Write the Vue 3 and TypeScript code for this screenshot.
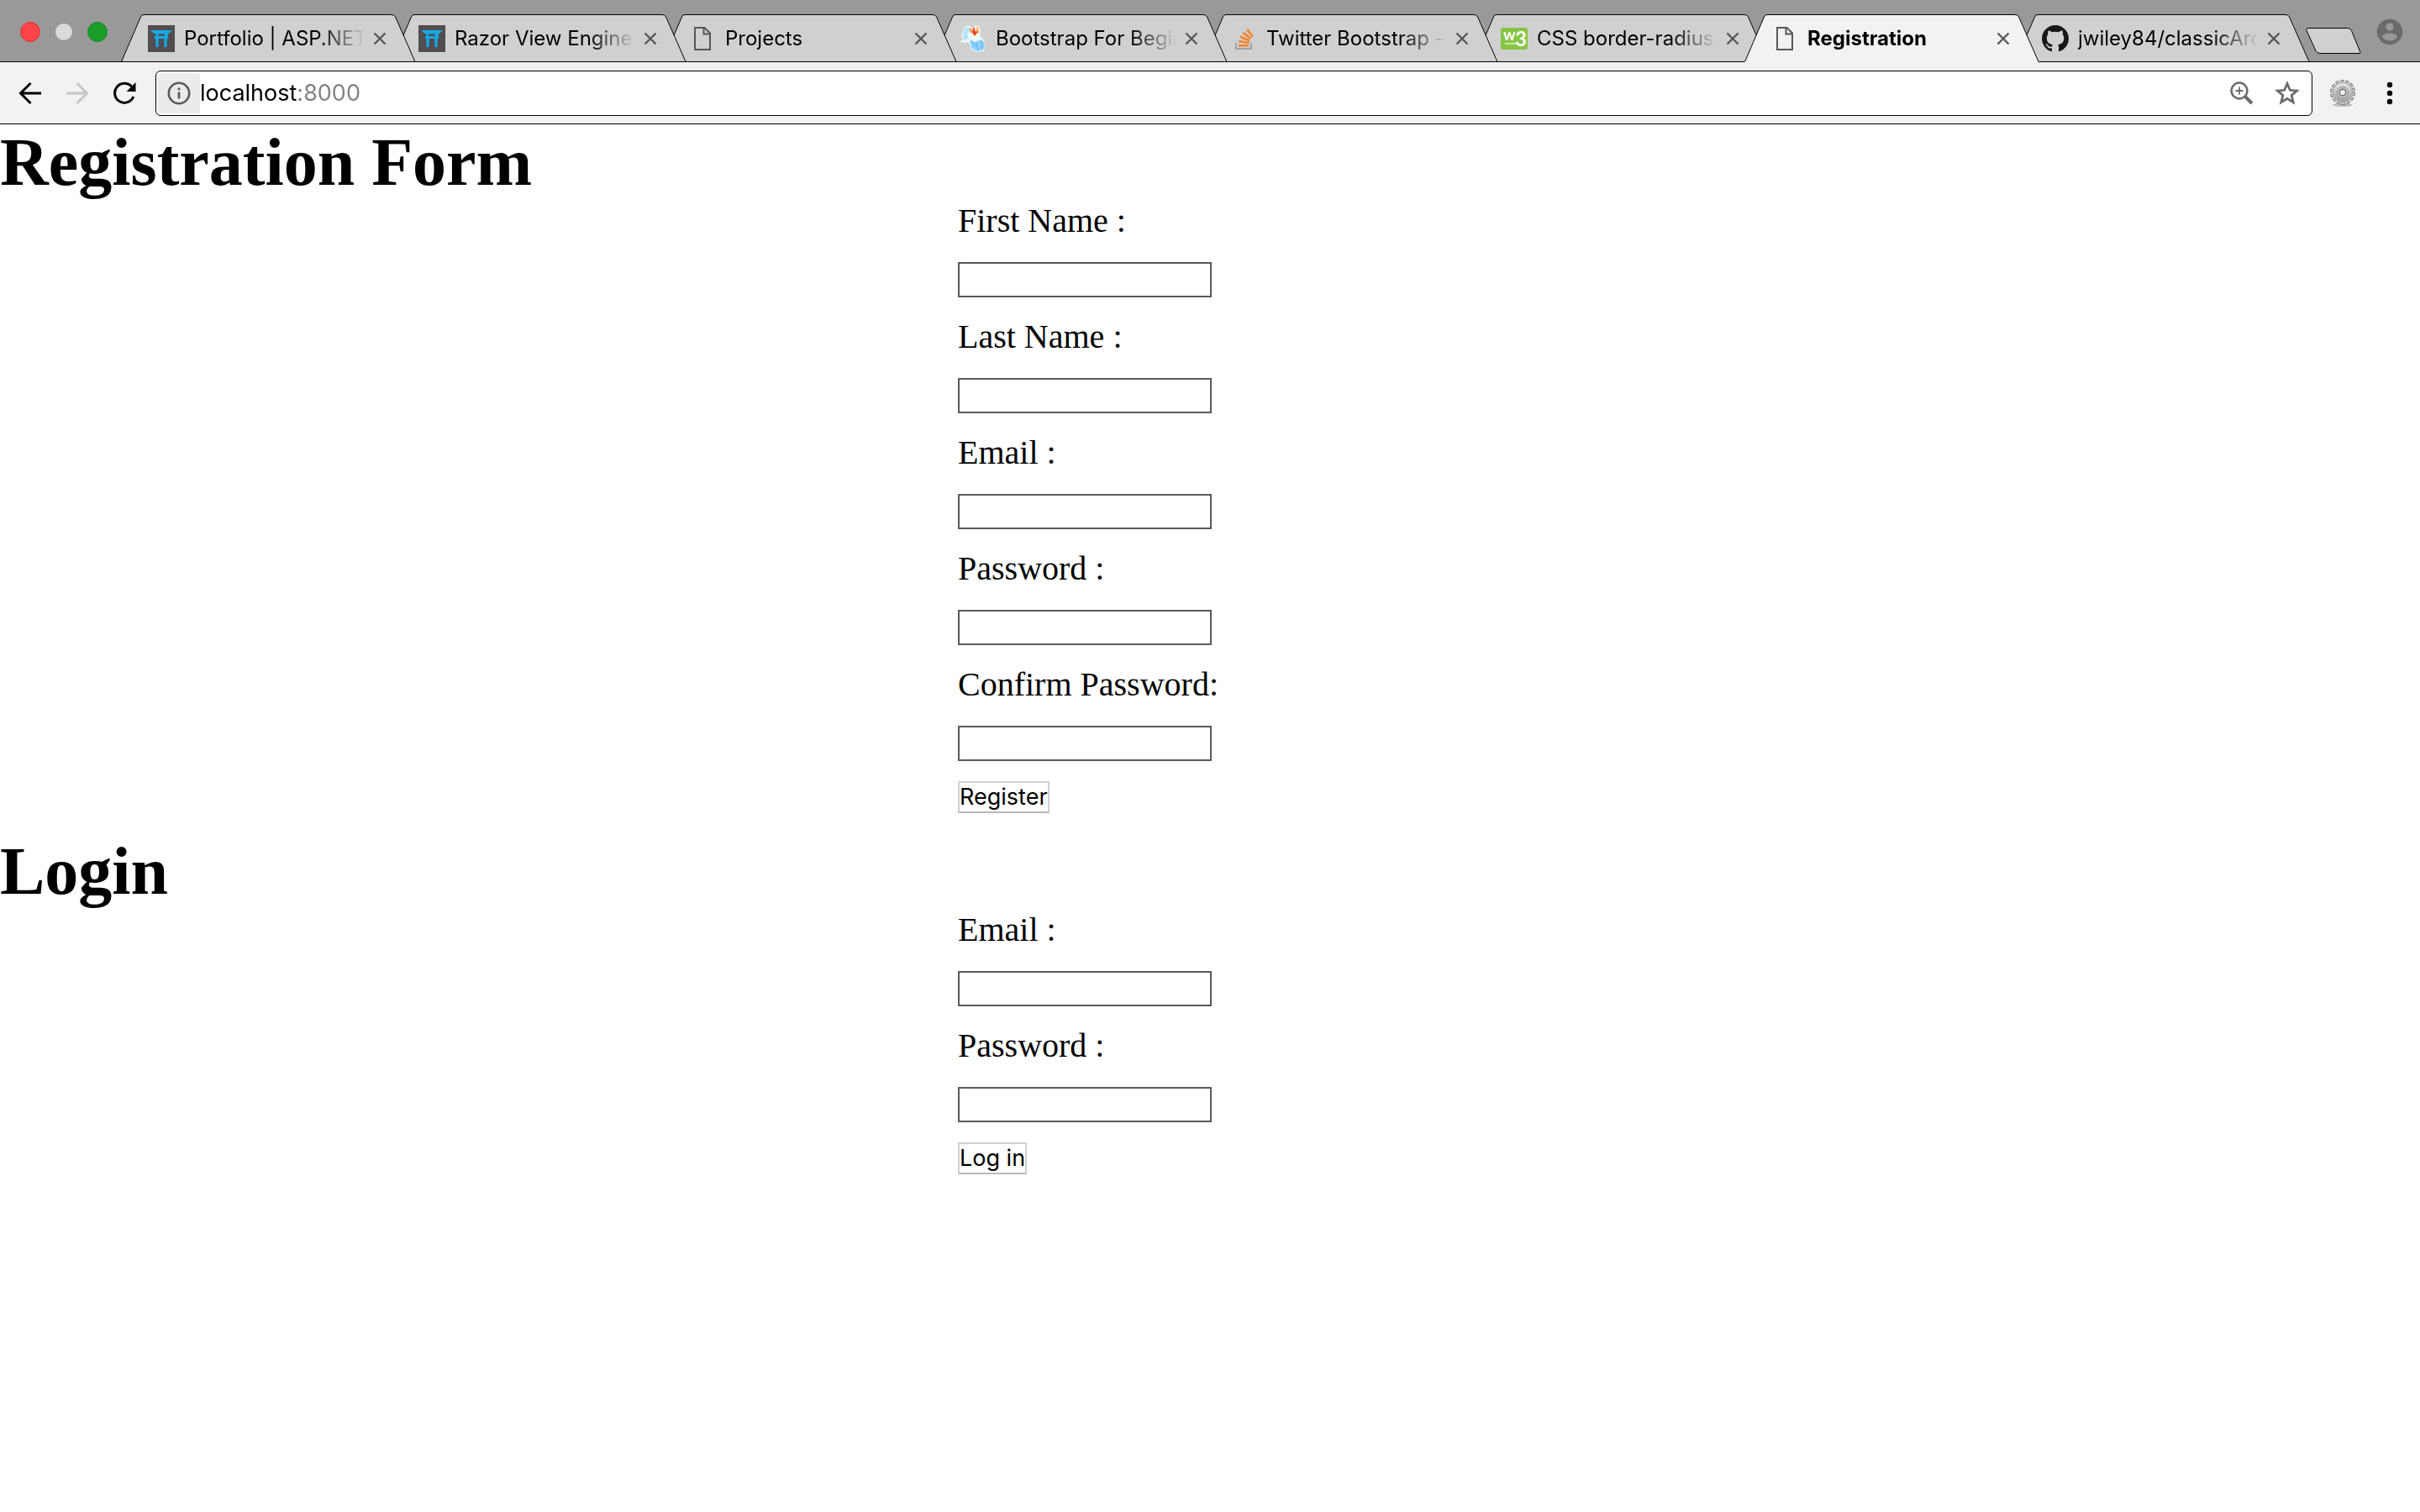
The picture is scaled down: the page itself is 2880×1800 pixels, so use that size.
<script setup lang="ts">
import { ref } from 'vue'

type IconName = 'torii' | 'file' | 'mascot' | 'stack' | 'w3' | 'github'

interface Tab {
  title: string
  icon: IconName
  active?: boolean
}

interface Field {
  id: string
  label: string
  type: string
}

interface FormSection {
  id: string
  heading: string
  action: string
  fields: Field[]
}

const tabs: Tab[] = [
  { title: 'Portfolio | ASP.NET', icon: 'torii' },
  { title: 'Razor View Engine', icon: 'torii' },
  { title: 'Projects', icon: 'file' },
  { title: 'Bootstrap For Begin', icon: 'mascot' },
  { title: 'Twitter Bootstrap -', icon: 'stack' },
  { title: 'CSS border-radius', icon: 'w3' },
  { title: 'Registration', icon: 'file', active: true },
  { title: 'jwiley84/classicArc', icon: 'github' },
]

const sections: FormSection[] = [
  {
    id: 'register',
    heading: 'Registration Form',
    action: 'Register',
    fields: [
      { id: 'first-name', label: 'First Name :', type: 'text' },
      { id: 'last-name', label: 'Last Name :', type: 'text' },
      { id: 'email', label: 'Email :', type: 'text' },
      { id: 'password', label: 'Password :', type: 'password' },
      { id: 'confirm', label: 'Confirm Password:', type: 'password' },
    ],
  },
  {
    id: 'login',
    heading: 'Login',
    action: 'Log in',
    fields: [
      { id: 'email', label: 'Email :', type: 'text' },
      { id: 'password', label: 'Password :', type: 'password' },
    ],
  },
]

const address = ref('localhost:8000')
const stacking = (tab: Tab, index: number): number => (tab.active ? tabs.length + 1 : tabs.length - index)
</script>

<template>
  <div class="window">
    <header class="strip">
      <div class="lights">
        <svg width="112" height="28" viewBox="0 0 112 28" aria-hidden="true">
          <circle cx="16" cy="14" r="11.5" fill="#ff4448" stroke="#dd3338" />
          <circle cx="56" cy="14" r="10" fill="#dadada" />
          <circle cx="96" cy="14" r="11.5" fill="#1b9d29" stroke="#138a20" />
        </svg>
      </div>
      <nav class="tabs">
        <div
          v-for="(tab, i) in tabs"
          :key="tab.title"
          class="tab"
          :class="{ active: tab.active }"
          :style="{ zIndex: stacking(tab, i) }"
        >
          <svg class="shape" viewBox="0 0 350 57" preserveAspectRatio="none" aria-hidden="true">
            <path class="fill" d="M0 57 L23.5 3 Q24.5 .5 27 .5 H322 Q325 .5 326.5 3 L350.5 57 Z" />
            <path class="edge" d="M0.5 56.5 L23.5 3 Q24.5 .5 27 .5 H322 Q325 .5 326.5 3 L350 56.5" />
            <path v-if="!tab.active" class="edge" d="M0 56.5 H350" />
          </svg>
          <svg class="favicon" viewBox="0 0 32 32" aria-hidden="true">
            <g v-if="tab.icon === 'torii'">
              <rect width="32" height="32" fill="#524d50" />
              <path
                fill="#17a7e1"
                d="M3 6 H29 L25 10 H24 V16 H22.7 V26 H19.3 V16 H12.7 V26 H9.3 V16 H8 V13 H9.3 V10 H7 Z M12.3 10.5 V13 H19.7 V10.5 Z"
              />
            </g>
            <path
              v-else-if="tab.icon === 'file'"
              d="M7 3 H18.5 L25 9.5 V29 H7 Z M17.5 3 V10.5 H25"
              fill="none"
              stroke="#575757"
              stroke-width="2"
            />
            <g v-else-if="tab.icon === 'mascot'">
              <path d="M5 3 L10 0 L15 3 L18 0 L23 1 L25 7 L24 12 L28 17 L30 22 L29 31 L20 32 L14 29 L11 20 L6 21 L0 20 L5 16 L2 13 Z" fill="#eef8fc" />
              <path d="M6 3 L12 2 L12 7 L9 11 L11 15 L6 18 L4 12 Z" fill="#b5e4f8" />
              <path d="M12 17 L18 20 L26 17 L30 22 L28 30 L20 31 L14 27 Z" fill="#8ed2fb" />
              <path d="M14 19 L19 25 M20 21 L22 29 M26 19 L27 28" stroke="#4cb0f2" stroke-width="1" />
              <path d="M12 6 L14 3 L15 8 L17 1 L19 8 L22 4 L23 10 L21 9 L18 13 L15 9 Z" fill="#f04a22" />
              <path d="M12 4 L14 9 M21 2 L22 9" stroke="#fbb45c" stroke-width="2" />
            </g>
            <g v-else-if="tab.icon === 'stack'" fill="none">
              <path d="M7 21 V28 H25 V21" stroke="#9aa5ae" stroke-width="2" />
              <path
                d="M10 24.3 H22 M10.2 19 L22.4 21.2 M12 13.5 L23 18.6 M15.5 8.8 L24.4 16 M20.2 5 L27 14"
                stroke="#f48024"
                stroke-width="2.6"
              />
            </g>
            <g v-else-if="tab.icon === 'w3'" fill="#fff">
              <rect y="3" width="32" height="26" rx="3" fill="#86c540" />
              <text class="w3" x="3" y="18" font-size="18">w</text>
              <text class="w3" x="17" y="25" font-size="24">3</text>
              <text class="w3" x="5" y="23" font-size="4">schools</text>
            </g>
            <path
              v-else
              transform="scale(2)"
              fill="#191717"
              d="M8 0C3.58 0 0 3.58 0 8c0 3.54 2.29 6.53 5.47 7.59.4.07.55-.17.55-.38 0-.19-.01-.82-.01-1.49-2.01.37-2.53-.49-2.69-.94-.09-.23-.48-.94-.82-1.13-.28-.15-.68-.52-.01-.53.63-.01 1.08.58 1.23.82.72 1.21 1.87.87 2.33.66.07-.52.28-.87.51-1.07-1.78-.2-3.64-.89-3.64-3.95 0-.87.31-1.59.82-2.15-.08-.2-.36-1.02.08-2.12 0 0 .67-.21 2.2.82.64-.18 1.32-.27 2-.27s1.36.09 2 .27c1.53-1.04 2.2-.82 2.2-.82.44 1.1.16 1.92.08 2.12.51.56.82 1.27.82 2.15 0 3.07-1.87 3.75-3.65 3.95.29.25.54.73.54 1.48 0 1.07-.01 1.93-.01 2.2 0 .21.15.46.55.38A8.01 8.01 0 0 0 16 8c0-4.42-3.58-8-8-8z"
            />
          </svg>
          <span class="title">{{ tab.title }}</span>
          <button class="close" type="button" :aria-label="`Close ${tab.title}`">
            <svg width="16" height="16" viewBox="0 0 16 16" aria-hidden="true">
              <path d="M1.5 1.5 L14.5 14.5 M14.5 1.5 L1.5 14.5" stroke="#575757" stroke-width="2.4" />
            </svg>
          </button>
        </div>
      </nav>
      <button class="new-tab" type="button" aria-label="New tab">
        <svg width="66" height="32" viewBox="0 0 66 32" aria-hidden="true">
          <path
            d="M3 .5 H50 Q53 .5 54.5 3.5 L64.5 28 Q66 30.5 63 30.5 H17 Q13.5 30.5 12 27.5 L1 3.5 Q0 .5 3 .5 Z"
            fill="#d0d0d0"
            stroke="#000"
          />
        </svg>
      </button>
      <button class="profile" type="button" aria-label="Profile">
        <svg width="32" height="32" viewBox="0 0 32 32" aria-hidden="true">
          <circle cx="16" cy="16" r="15.3" fill="#6b6b6b" />
          <circle cx="16" cy="10" r="4.6" fill="#999" />
          <path d="M6.8 21.5 Q10 17.5 16 17.5 T25.2 21.5 Q22 26.5 16 26.5 T6.8 21.5 Z" fill="#999" />
        </svg>
      </button>
    </header>

    <div class="toolbar">
      <button class="tool" type="button" aria-label="Back">
        <svg width="28" height="28" viewBox="0 0 28 28" aria-hidden="true">
          <path d="M27 14 H3 M14.5 2 L2.5 14 L14.5 26" fill="none" stroke="#000" stroke-width="3" />
        </svg>
      </button>
      <button class="tool" type="button" aria-label="Forward" disabled>
        <svg width="28" height="28" viewBox="0 0 28 28" aria-hidden="true">
          <path d="M1 14 H25 M13.5 2 L25.5 14 L13.5 26" fill="none" stroke="#c6c6c6" stroke-width="3" />
        </svg>
      </button>
      <button class="tool" type="button" aria-label="Reload">
        <svg width="28" height="28" viewBox="0 0 28 28" aria-hidden="true">
          <path d="M22.5 6 A11.5 11.5 0 1 0 24.8 18" fill="none" stroke="#000" stroke-width="3" />
          <path d="M27.5 1 V12 H16.5 Z" fill="#000" />
        </svg>
      </button>
      <div class="omnibox">
        <button class="info" type="button" aria-label="Site information">
          <svg width="28" height="28" viewBox="0 0 28 28" aria-hidden="true">
            <circle cx="14" cy="14" r="12.2" fill="none" stroke="#5a5a5a" stroke-width="2.6" />
            <path d="M14 7.5 V10.2 M14 12.5 V20.5" stroke="#5a5a5a" stroke-width="2.8" />
          </svg>
        </button>
        <input v-model="address" class="address" type="text" aria-label="Address" spellcheck="false" />
        <button class="action" type="button" aria-label="Zoom">
          <svg width="28" height="28" viewBox="0 0 28 28" aria-hidden="true">
            <circle cx="11" cy="11" r="9.4" fill="none" stroke="#6b6b6b" stroke-width="2.5" />
            <path d="M11 6.5 V15.5 M6.5 11 H15.5" stroke="#6b6b6b" stroke-width="1.8" />
            <path d="M17.5 17.5 L26 26" stroke="#6b6b6b" stroke-width="4" />
          </svg>
        </button>
        <button class="action" type="button" aria-label="Bookmark this page">
          <svg width="32" height="32" viewBox="0 0 32 32" aria-hidden="true">
            <path
              d="M16 4.500 L19.3 12.3 L27.5 13 L21.2 18.5 L23.2 26.8 L16 22.4 L8.8 26.8 L10.8 18.5 L4.5 13 L12.7 12.3 Z"
              fill="none"
              stroke="#6b6b6b"
              stroke-width="2.8"
            />
          </svg>
        </button>
      </div>
      <button class="extension" type="button" aria-label="Extension">
        <svg width="32" height="34" viewBox="0 0 32 34" aria-hidden="true">
          <defs>
            <linearGradient id="gear-metal" x1="0" y1="0" x2="0" y2="1">
              <stop offset="0" stop-color="#ececec" />
              <stop offset="1" stop-color="#9c9c9c" />
            </linearGradient>
          </defs>
          <ellipse cx="16" cy="31" rx="12" ry="2" fill="#bdbdbd" />
          <circle cx="16" cy="16" r="13" fill="none" stroke="#707070" stroke-width="4" stroke-dasharray="4 1.834" />
          <circle cx="16" cy="16" r="12.8" fill="none" stroke="#d2d2d2" stroke-width="2.600" stroke-dasharray="2.2 3.544" stroke-dashoffset="-.9" />
          <circle cx="16" cy="16" r="11.5" fill="url(#gear-metal)" stroke="#a8a8a8" />
          <circle cx="16" cy="16" r="7" fill="#c2c2c2" stroke="#989898" />
          <circle cx="16" cy="16" r="3.8" fill="#eee" stroke="#707070" stroke-width="1.4" />
        </svg>
      </button>
      <button class="menu" type="button" aria-label="Menu">
        <svg width="8" height="28" viewBox="0 0 8 28" aria-hidden="true">
          <circle cx="4" cy="4" r="3.2" />
          <circle cx="4" cy="14" r="3.2" />
          <circle cx="4" cy="24" r="3.2" />
        </svg>
      </button>
    </div>

    <main>
      <section v-for="section in sections" :key="section.id">
        <h1>{{ section.heading }}</h1>
        <form @submit.prevent>
          <div v-for="field in section.fields" :key="field.id" class="field">
            <label :for="`${section.id}-${field.id}`">{{ field.label }}</label>
            <input :id="`${section.id}-${field.id}`" :type="field.type" />
          </div>
          <button class="submit" type="submit">{{ section.action }}</button>
        </form>
      </section>
    </main>
  </div>
</template>

<style>
body {
  background: #fff;
}
</style>

<style scoped>
.window {
  color: #000;
  font-family: Inter, "Liberation Sans", sans-serif;
}

svg {
  display: block;
}

button {
  padding: 0;
  border: 0;
  background: none;
  color: inherit;
  font-family: inherit;
}

.strip {
  display: flex;
  align-items: flex-end;
  box-sizing: border-box;
  height: 74px;
  padding-right: 20px;
  border-bottom: 1px solid #000;
  background: #999;
}

.lights {
  flex: none;
  width: 124px;
  padding: 0 0 21px 20px;
}

.tabs {
  display: flex;
  flex: 0 1 2604px;
  min-width: 0;
  margin-bottom: -1px;
}

.tab {
  position: relative;
  display: flex;
  flex: 0 1 350px;
  align-items: center;
  box-sizing: border-box;
  min-width: 0;
  height: 57px;
  padding: 0 28px 0 32px;
}

.tab + .tab {
  margin-left: -28px;
}

.shape {
  position: absolute;
  inset: 0;
  width: 100%;
  height: 100%;
}

.fill {
  fill: #d0d0d0;
}

.active .fill {
  fill: #f2f2f2;
}

.edge {
  fill: none;
  stroke: #000;
}

.favicon {
  position: relative;
  flex: none;
  width: 32px;
  height: 32px;
}

.w3 {
  font-family: Lato, sans-serif;
  font-weight: 700;
}

.title {
  position: relative;
  flex: 1;
  min-width: 0;
  margin: 0 4px 0 11px;
  overflow: hidden;
  font-size: 24px;
  line-height: 32px;
  white-space: nowrap;
  mask-image: linear-gradient(to left, transparent, #000 56px);
}

.active .title {
  font-weight: 700;
}

.close {
  position: relative;
  display: flex;
  flex: none;
  align-items: center;
  justify-content: center;
  width: 28px;
  height: 28px;
}

.new-tab {
  flex: none;
  margin: 0 auto 8px -4px;
}

.profile {
  flex: none;
  margin-bottom: 19px;
}

.toolbar {
  display: flex;
  align-items: center;
  box-sizing: border-box;
  height: 74px;
  padding: 0 32px 0 22px;
  border-bottom: 1px solid #000;
  background: #f2f2f2;
}

.tool {
  flex: none;
  width: 28px;
  margin-right: 28px;
}

.tool:nth-child(3) {
  margin-right: 23px;
}

.omnibox {
  display: flex;
  flex: 1;
  align-items: center;
  box-sizing: border-box;
  min-width: 0;
  height: 54px;
  padding: 0 13px 0 2px;
  border: 1px solid #000;
  border-radius: 6px;
  background: #fff;
}

.info {
  display: flex;
  flex: none;
  align-items: center;
  justify-content: center;
  width: 50px;
  height: 48px;
  border-radius: 4px;
  background: #ebebeb;
}

.address {
  flex: 1;
  min-width: 0;
  padding: 0;
  border: 0;
  outline: 0;
  background: linear-gradient(to right, #000 115px, #808080 115px);
  background-clip: text;
  color: transparent;
  font-family: inherit;
  font-size: 27px;
  line-height: 40px;
}

.action {
  flex: none;
  margin-left: 24px;
}

.extension {
  flex: none;
  margin: 0 36px 0 20px;
}

.menu {
  flex: none;
}

main {
  font-family: "Liberation Serif", serif;
}

h1 {
  margin: 0 0 2px;
  font-size: 80px;
  font-weight: 700;
  line-height: 90px;
}

form {
  display: flex;
  flex-direction: column;
  align-items: flex-start;
  width: 600px;
  max-width: 100%;
  margin: 0 auto;
  padding-bottom: 24px;
}

.field {
  display: flex;
  flex-direction: column;
  align-items: flex-start;
  margin-bottom: 24px;
}

label {
  margin-bottom: 26px;
  font-size: 40px;
  line-height: 46px;
}

.field input {
  box-sizing: border-box;
  width: 302px;
  height: 42px;
  padding: 0 4px;
  border: 2px solid #59595b;
  outline: 0;
  background: #fff;
  font-size: 27px;
}

.submit {
  box-sizing: border-box;
  height: 38px;
  padding: 0;
  border: 2px solid #d0d0d0;
  border-bottom-color: #b8b8b8;
  background: #fff;
  font-family: Inter, "Liberation Sans", sans-serif;
  font-size: 27px;
  line-height: 34px;
}
</style>
